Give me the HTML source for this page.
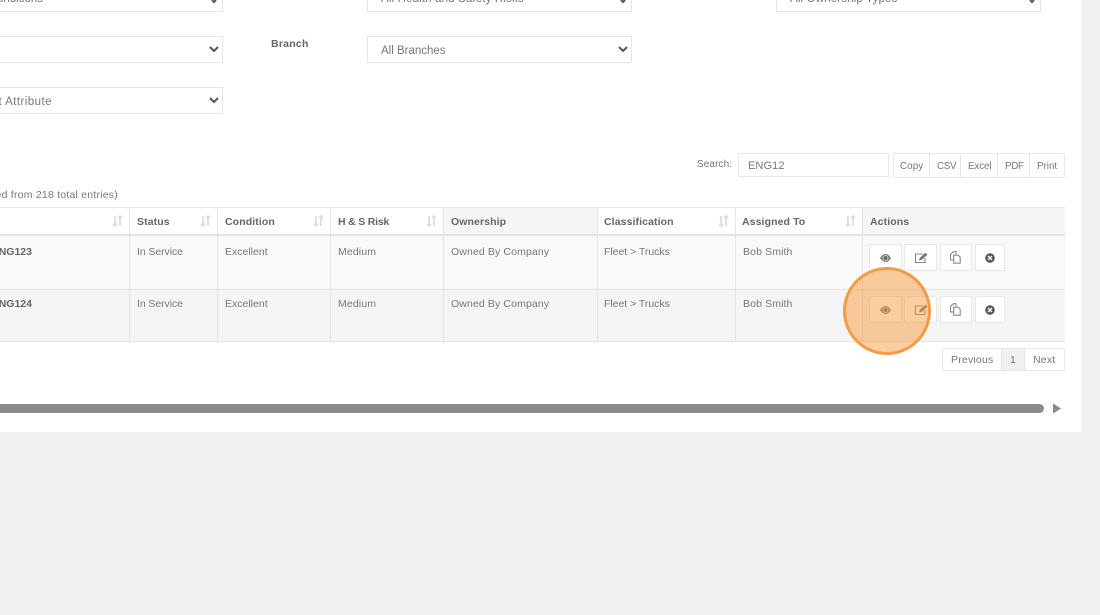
<!DOCTYPE html>
<html><head><meta charset="utf-8"><style>
html,body{margin:0;padding:0}
body{width:1100px;height:615px;overflow:hidden;background:#f1f1f1;position:relative;font-family:"Liberation Sans",sans-serif;color:#777}
div,span{position:absolute;box-sizing:border-box}
#p{left:0;top:0;width:1081px;height:432px;background:#fff}
.s{background:#fff;border:1px solid #e5e5e5;overflow:hidden}
.t{white-space:nowrap;font-size:10.5px;letter-spacing:.12px;line-height:14px}
.b{font-weight:bold;color:#666;letter-spacing:.1px}
.sel{font-size:11.5px;letter-spacing:0;line-height:14px;white-space:nowrap;color:#777}
.h{background:#fff;top:207px;height:29px;border-top:1px solid #e8e8e8;border-bottom:2px solid #e2e2e2;border-right:1px solid #e6e6e6}
.g{background:#f5f5f5}
.btn{background:#fff;border:1px solid #e8e8e8;border-radius:2px;height:27px}
.v{width:1px;background:#e4e4e4}
.d{font-size:9.8px;letter-spacing:0}
svg{position:absolute}
</style></head><body>
<div id="p"></div>

<div class="s" style="left:0;top:0;width:223px;height:12px;border-left:0;border-top:0"><span class="sel" style="right:179px;top:-8px">All Conditions</span></div>
<div class="s" style="left:367px;top:0;width:265px;height:12px;border-top:0"><span class="sel" style="left:13px;top:-8px;letter-spacing:.15px">All Health and Safety Risks</span></div>
<div class="s" style="left:776px;top:0;width:265px;height:12px;border-top:0"><span class="sel" style="left:13px;top:-8px;letter-spacing:.15px">All Ownership Types</span></div>
<div class="s" style="left:0;top:36px;width:223px;height:27px;border-left:0"></div>
<div class="s" style="left:367px;top:36px;width:265px;height:27px"><span class="sel" style="left:13px;top:7px">All Branches</span></div>
<div class="s" style="left:0;top:87px;width:223px;height:27px;border-left:0"><span class="sel" style="right:170px;top:7px;letter-spacing:.45px">Select Asset Attribute</span></div>
<span class="t b" style="left:271px;top:37px;font-size:10.5px;letter-spacing:.25px">Branch</span>

<svg style="left:0;top:0" width="1100" height="120" fill="none" stroke="#555" stroke-width="2">
<path d="M210 47l4 4 4-4M210 98l4 4 4-4M619 47l4 4 4-4"/>
<path d="M212 0l2 2 2-2M621 0l2 2 2-2M1030 0l2 2 2-2"/>
</svg>

<span class="t" style="left:697px;top:158px;font-size:10px;letter-spacing:.1px">Search:</span>
<div class="s" style="left:738px;top:153px;width:151px;height:24px;border-color:#e8e8e8"></div>
<span class="t" style="left:748px;top:159px;font-size:11px;letter-spacing:.1px">ENG12</span>
<div class="btn" style="left:893px;top:153px;width:172px;height:25px"></div>
<div class="v" style="left:929px;top:153px;height:25px"></div>
<div class="v" style="left:960px;top:153px;height:25px"></div>
<div class="v" style="left:997px;top:153px;height:25px"></div>
<div class="v" style="left:1029px;top:153px;height:25px"></div>
<span class="t d" style="left:900px;top:160px;letter-spacing:.1px">Copy</span>
<span class="t d" style="left:937px;top:160px;letter-spacing:-.3px">CSV</span>
<span class="t d" style="left:968px;top:160px;letter-spacing:-.1px">Excel</span>
<span class="t d" style="left:1005px;top:160px;letter-spacing:-.3px">PDF</span>
<span class="t d" style="left:1037px;top:160px">Print</span>

<div style="left:0;top:188px;width:118px;height:15px;overflow:hidden"><span class="t" style="right:0;top:0;letter-spacing:.22px">filtered from 218 total entries)</span></div>

<div class="h" style="left:0;width:130px"></div>
<div class="h" style="left:130px;width:88px"></div>
<div class="h" style="left:218px;width:113px"></div>
<div class="h" style="left:331px;width:113px"></div>
<div class="h g" style="left:444px;width:154px"></div>
<div class="h" style="left:598px;width:138px"></div>
<div class="h" style="left:736px;width:127px"></div>
<div class="h g" style="left:863px;width:202px;border-right:0"></div>

<span class="t b" style="left:137px;top:215px">Status</span>
<span class="t b" style="left:225px;top:215px">Condition</span>
<span class="t b" style="left:338px;top:215px;letter-spacing:-.2px">H &amp; S Risk</span>
<span class="t b" style="left:451px;top:215px">Ownership</span>
<span class="t b" style="left:604px;top:215px">Classification</span>
<span class="t b" style="left:742px;top:215px">Assigned To</span>
<span class="t b" style="left:870px;top:215px">Actions</span>

<svg style="left:0;top:0" width="1100" height="240" fill="none" stroke="#e0e0e0" stroke-width="2">
<path d="M115 216v10M113 224l2 2 2-2M120 226v-10M118 218l2-2 2 2"/>
<path d="M203 216v10M201 224l2 2 2-2M208 226v-10M206 218l2-2 2 2"/>
<path d="M316 216v10M314 224l2 2 2-2M321 226v-10M319 218l2-2 2 2"/>
<path d="M429 216v10M427 224l2 2 2-2M434 226v-10M432 218l2-2 2 2"/>
<path d="M721 216v10M719 224l2 2 2-2M726 226v-10M724 218l2-2 2 2"/>
<path d="M848 216v10M846 224l2 2 2-2M853 226v-10M851 218l2-2 2 2"/>
</svg>

<div style="left:0;top:236px;width:1065px;height:54px;background:#f9f9f9;border-bottom:1px solid #e4e4e4"></div>
<div style="left:0;top:290px;width:1065px;height:52px;background:#f5f5f5;border-bottom:1px solid #e4e4e4"></div>
<div class="v" style="left:129px;top:236px;height:106px"></div>
<div class="v" style="left:217px;top:236px;height:106px"></div>
<div class="v" style="left:330px;top:236px;height:106px"></div>
<div class="v" style="left:443px;top:236px;height:106px"></div>
<div class="v" style="left:597px;top:236px;height:106px"></div>
<div class="v" style="left:735px;top:236px;height:106px"></div>
<div class="v" style="left:862px;top:236px;height:106px"></div>

<div style="left:0;top:245px;width:40px;height:15px;overflow:hidden"><span class="t b" style="right:8px;top:0;letter-spacing:0">ENG123</span></div>
<span class="t" style="left:137px;top:245px;letter-spacing:-.08px">In Service</span>
<span class="t" style="left:225px;top:245px;letter-spacing:0">Excellent</span>
<span class="t" style="left:338px;top:245px">Medium</span>
<span class="t" style="left:451px;top:245px">Owned By Company</span>
<span class="t" style="left:604px;top:245px;letter-spacing:-.03px">Fleet &gt; Trucks</span>
<span class="t" style="left:743px;top:245px">Bob Smith</span>

<div style="left:0;top:297px;width:40px;height:15px;overflow:hidden"><span class="t b" style="right:8px;top:0;letter-spacing:0">ENG124</span></div>
<span class="t" style="left:137px;top:297px;letter-spacing:-.08px">In Service</span>
<span class="t" style="left:225px;top:297px;letter-spacing:0">Excellent</span>
<span class="t" style="left:338px;top:297px">Medium</span>
<span class="t" style="left:451px;top:297px">Owned By Company</span>
<span class="t" style="left:604px;top:297px;letter-spacing:-.03px">Fleet &gt; Trucks</span>
<span class="t" style="left:743px;top:297px">Bob Smith</span>

<div class="btn" style="left:869px;top:244px;width:33px"></div>
<div class="btn" style="left:904px;top:244px;width:33px"></div>
<div class="btn" style="left:940px;top:244px;width:32px"></div>
<div class="btn" style="left:975px;top:244px;width:30px"></div>
<div class="btn" style="left:869px;top:296px;width:33px"></div>
<div class="btn" style="left:904px;top:296px;width:33px"></div>
<div class="btn" style="left:940px;top:296px;width:32px"></div>
<div class="btn" style="left:975px;top:296px;width:30px"></div>

<svg style="left:0;top:0" width="1100" height="330">
<g>
<path d="M880 258q5.500-8 11 0q-5.500 8-11 0z" fill="#777"/><circle cx="885.500" cy="258" r="2.900" fill="#ddd"/><circle cx="885.500" cy="258" r="2" fill="#666"/>
<path d="M923 254h-7.500v8.500h9.500v-4.500" fill="none" stroke="#888" stroke-width="1.100"/><path d="M919 260.500l.8-2.800 5.700-5 2 2-5.700 5z" fill="#777"/>
<path d="M954 260h-3.500v-5.500l3-2.800h2.500v2.500M955 255.200h3l2.200 2v6h-6.500v-8z" fill="none" stroke="#888" stroke-width="1.100"/>
<circle cx="990" cy="258" r="4.800" fill="#555"/><path d="M988 256l4 4M992 256l-4 4" stroke="#fff" stroke-width="1.300"/>
</g>
<g>
<path d="M880 310q5.500-8 11 0q-5.500 8-11 0z" fill="#777"/><circle cx="885.500" cy="310" r="2.900" fill="#ddd"/><circle cx="885.500" cy="310" r="2" fill="#666"/>
<path d="M923 306h-7.500v8.500h9.500v-4.500" fill="none" stroke="#888" stroke-width="1.100"/><path d="M919 312.500l.8-2.800 5.700-5 2 2-5.700 5z" fill="#777"/>
<path d="M954 312h-3.500v-5.500l3-2.800h2.500v2.500M955 307.200h3l2.200 2v6h-6.500v-8z" fill="none" stroke="#888" stroke-width="1.100"/>
<circle cx="990" cy="310" r="4.800" fill="#555"/><path d="M988 308l4 4M992 308l-4 4" stroke="#fff" stroke-width="1.300"/>
</g>
</svg>

<div class="btn" style="left:942px;top:348px;width:123px;height:23px"></div>
<div style="left:1001px;top:348px;width:24px;height:23px;background:#f1f1f1;border:1px solid #e6e6e6"></div>
<span class="t" style="left:951px;top:353px;letter-spacing:.2px">Previous</span>
<span class="t" style="left:1010px;top:353px">1</span>
<span class="t" style="left:1033px;top:353px;letter-spacing:.2px">Next</span>

<div style="left:0;top:404px;width:1044px;height:9px;background:#8a8a8a;border-radius:0 5px 5px 0"></div>
<svg style="left:0;top:0" width="1100" height="420"><path d="M1053 403.500l8 5-8 5z" fill="#8a8a8a"/></svg>

<div style="left:843px;top:267px;width:88px;height:88px;border-radius:50%;background:rgba(250,150,60,.48);border:3.500px solid #f59a45"></div>
</body></html>
